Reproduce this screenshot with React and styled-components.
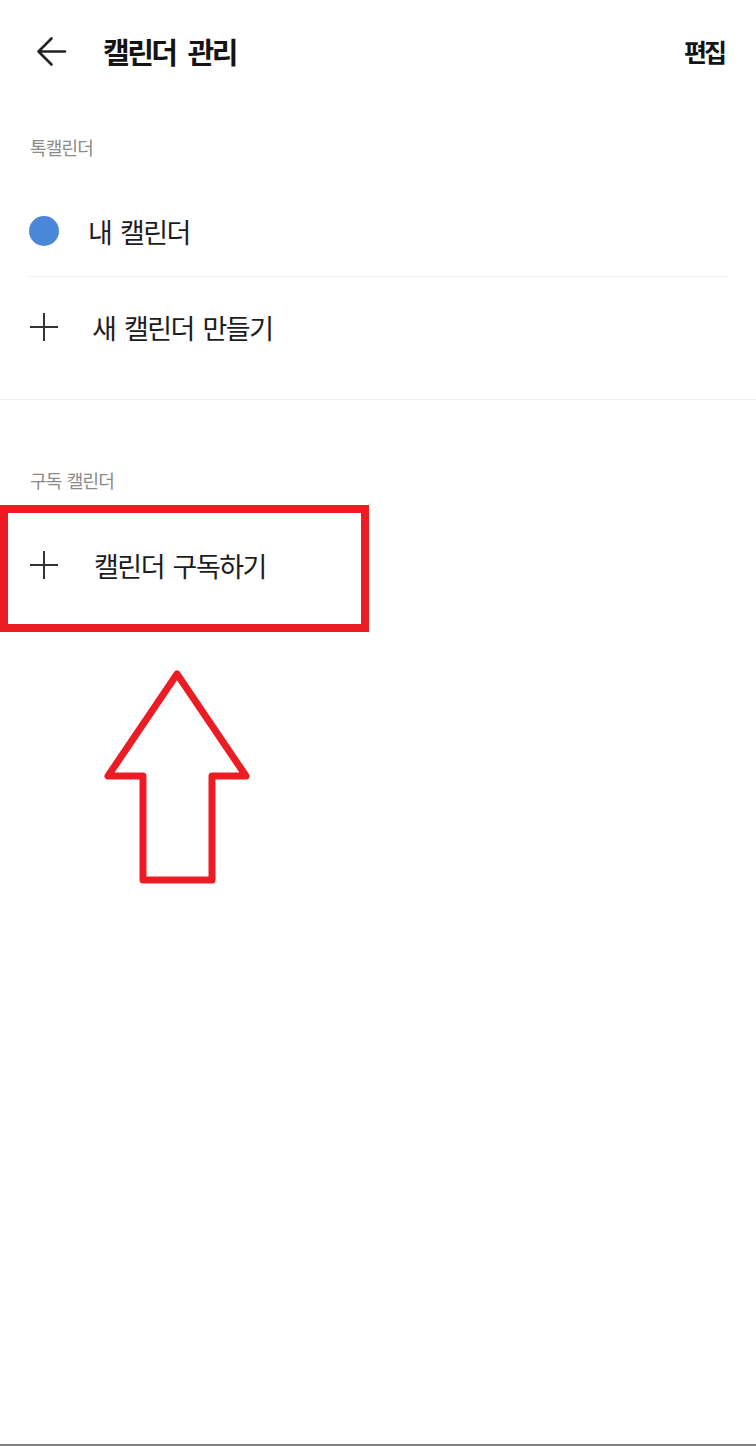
import React from "react";
import styled, { createGlobalStyle } from "styled-components";

const Global = createGlobalStyle`
  html, body { margin: 0; padding: 0; background: #fff; }
  body { font-family: "Noto Sans CJK KR", "Noto Sans", sans-serif; }
`;

const Page = styled.div`
  position: relative;
  width: 756px;
  height: 1446px;
  box-sizing: border-box;
  border-bottom: 2px solid #808080;
  background: #fff;
  overflow: hidden;
`;

const Header = styled.header`
  height: 102px;
  display: flex;
  align-items: center;
  padding: 0 31px 0 35px;
  box-sizing: border-box;
`;

const BackButton = styled.button`
  width: 33px;
  height: 33px;
  padding: 0;
  border: 0;
  background: none;
  display: flex;
  align-items: center;
  justify-content: center;
  color: #222;
`;

const Title = styled.h1`
  margin: 0 0 0 35px;
  font-size: 29px;
  font-weight: 700;
  letter-spacing: -2.5px;
  word-spacing: 8px;
  color: #141414;
  flex: 1;
  line-height: 1;
`;

const EditButton = styled.span`
  font-size: 25px;
  font-weight: 700;
  letter-spacing: -3px;
  color: #141414;
  line-height: 1;
  margin-right: 1px;
`;

const Section = styled.section`
  padding-bottom: 22px;
  border-bottom: ${(p) => (p.$divided ? "1px solid #f0f0f0" : "none")};
`;

const Label = styled.div`
  padding: ${(p) => p.$top}px 30px ${(p) => p.$bottom}px;
  font-size: 18px;
  line-height: 22px;
  letter-spacing: -0.8px;
  word-spacing: 2px;
  color: #8a8a8a;
`;

const Row = styled.div`
  height: ${(p) => p.$h}px;
  margin: 0 28px;
  display: flex;
  align-items: center;
  border-bottom: ${(p) => (p.$line ? "1px solid #f0f0f0" : "none")};
`;

const IconSlot = styled.div`
  width: 32px;
  display: flex;
  align-items: center;
  justify-content: center;
  margin-right: ${(p) => p.$gap}px;
`;

const Dot = styled.span`
  width: 30px;
  height: 30px;
  border-radius: 50%;
  background: #4a87d9;
`;

const RowText = styled.span`
  font-size: 27px;
  letter-spacing: -1.5px;
  word-spacing: 4px;
  color: #1c1c1c;
  line-height: 1;
`;

const HighlightBox = styled.div`
  position: absolute;
  left: 0;
  top: 505px;
  width: 369px;
  height: 127px;
  box-sizing: border-box;
  border: 8px solid #ec1c24;
  pointer-events: none;
`;

const ArrowOverlay = styled.svg`
  position: absolute;
  left: 0;
  top: 0;
  pointer-events: none;
`;

const PlusIcon = () => (
  <svg width="30" height="30" viewBox="0 0 30 30">
    <path d="M15 1v28M1 15h28" stroke="#333" strokeWidth="2" fill="none" />
  </svg>
);

const BackIcon = () => (
  <svg width="31" height="31" viewBox="0 0 31 31">
    <path
      d="M29 15.5H3M15.5 2.5L2.5 15.5l13 13"
      stroke="#222"
      strokeWidth="2.6"
      fill="none"
      strokeLinecap="round"
      strokeLinejoin="round"
    />
  </svg>
);

export default function App() {
  return (
    <>
      <Global />
      <Page>
        <Header>
          <BackButton aria-label="뒤로">
            <BackIcon />
          </BackButton>
          <Title>캘린더 관리</Title>
          <EditButton>편집</EditButton>
        </Header>

        <Section $divided>
          <Label $top={34} $bottom={28}>톡캘린더</Label>
          <Row $h={90} $line>
            <IconSlot $gap={28}>
              <Dot />
            </IconSlot>
            <RowText>내 캘린더</RowText>
          </Row>
          <Row $h={100}>
            <IconSlot $gap={32}>
              <PlusIcon />
            </IconSlot>
            <RowText>새 캘린더 만들기</RowText>
          </Row>
        </Section>

        <Section>
          <Label $top={69} $bottom={22}>구독 캘린더</Label>
          <Row $h={104}>
            <IconSlot $gap={34}>
              <PlusIcon />
            </IconSlot>
            <RowText>캘린더 구독하기</RowText>
          </Row>
        </Section>

        <HighlightBox />
        <ArrowOverlay width="756" height="1446" viewBox="0 0 756 1446">
          <polygon
            points="177,674 108,776 143,776 143,880 212,880 212,776 246,776"
            fill="none"
            stroke="#ec1c24"
            strokeWidth="7"
            strokeLinejoin="round"
          />
        </ArrowOverlay>
      </Page>
    </>
  );
}
